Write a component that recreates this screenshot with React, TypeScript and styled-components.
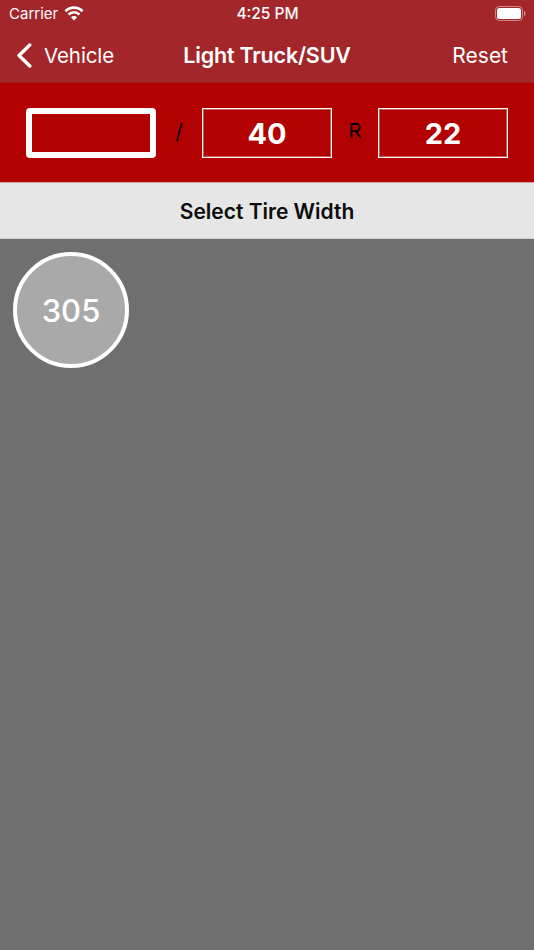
import React from 'react';
import styled, { createGlobalStyle } from 'styled-components';

const GlobalStyle = createGlobalStyle`
  html, body {
    margin: 0;
    padding: 0;
    background: #6f6f6f;
  }
  * {
    box-sizing: border-box;
  }
`;

const Screen = styled.div`
  width: 534px;
  height: 950px;
  display: flex;
  flex-direction: column;
  overflow: hidden;
  background: #6f6f6f;
  font-family: Inter, 'Liberation Sans', sans-serif;
`;

const Header = styled.header`
  height: 83px;
  background: #a2262a;
  color: #fff;
  border-bottom: 1px solid #9b1a1c;
`;

const StatusBar = styled.div`
  height: 28px;
  padding: 0 8px 1px 9px;
  display: grid;
  grid-template-columns: 1fr auto 1fr;
  align-items: center;
  font-size: 15.5px;
  font-weight: 500;
`;

const StatusLeft = styled.div`
  display: flex;
  align-items: center;
  gap: 6px;
  font-weight: 400;
  font-size: 15px;
`;

const StatusRight = styled.div`
  display: flex;
  justify-content: flex-end;
`;

const NavBar = styled.nav`
  height: 54px;
  padding: 0 17px;
  display: grid;
  grid-template-columns: 1fr auto 1fr;
  align-items: center;
`;

const BackLink = styled.div`
  display: flex;
  align-items: center;
  gap: 12px;
  font-size: 20.5px;
  letter-spacing: -0.1px;
`;

const NavTitle = styled.div`
  font-size: 21.5px;
  font-weight: 600;
  letter-spacing: -0.2px;
`;

const ResetLink = styled.div`
  justify-self: end;
  margin-right: 9px;
  font-size: 21px;
`;

const SizeBar = styled.section`
  height: 100px;
  padding: 25px 26px 0;
  display: flex;
  align-items: flex-start;
  justify-content: space-between;
  background: #b30000;
  border-bottom: 1px solid #d9a0a0;
`;

const SizeField = styled.div<{ $active?: boolean }>`
  width: 130px;
  height: 50px;
  display: flex;
  align-items: center;
  justify-content: center;
  color: #fff;
  font-size: 29px;
  font-weight: 700;
  border: ${({ $active }) => ($active ? '6px solid #fff' : '1px solid #fff')};
  border-radius: ${({ $active }) => ($active ? '4px' : '0')};
  box-shadow: ${({ $active }) => ($active ? 'none' : 'inset 0 0 0 1px rgba(255, 255, 255, 0.35)')};
`;

const Separator = styled.span<{ $size: number }>`
  width: 46px;
  height: 50px;
  display: flex;
  align-items: center;
  justify-content: center;
  color: #000;
  font-size: ${({ $size }) => $size}px;
  font-weight: 400;
  padding-bottom: 4px;
`;

const PromptBar = styled.div`
  height: 56px;
  padding-top: 1px;
  display: flex;
  align-items: center;
  justify-content: center;
  background: #e6e6e6;
  border-bottom: 1px solid #d0d0d0;
  color: #0c0c0c;
  font-size: 21px;
  font-weight: 600;
`;

const WidthGrid = styled.div`
  flex: 1;
  padding: 13px;
  display: flex;
  flex-wrap: wrap;
  align-content: flex-start;
  gap: 13px;
`;

const WidthOption = styled.button`
  width: 116px;
  height: 116px;
  padding: 0;
  display: flex;
  align-items: center;
  justify-content: center;
  border: 4px solid #fff;
  border-radius: 50%;
  background: #a9a9a9;
  color: #fff;
  font-family: inherit;
  font-size: 31px;
  font-weight: 550;
`;

const WifiIcon = () => (
  <svg width="20" height="15" viewBox="0 0 20 15" fill="none">
    <path d="M1.400 5.200C6.300.4 13.700.4 18.600 5.200" stroke="#fff" strokeWidth="2.600" />
    <path d="M4.600 8.500C7.700 5.500 12.300 5.500 15.400 8.500" stroke="#fff" strokeWidth="2.600" />
    <path d="M6.900 11.200C8.700 9.500 11.300 9.500 13.100 11.200L10 14.600Z" fill="#fff" />
  </svg>
);

const BatteryIcon = () => (
  <svg width="31" height="15" viewBox="0 0 31 15">
    <rect x="0.5" y="0.5" width="27" height="14" rx="4" fill="none" stroke="#fff" strokeOpacity="0.45" />
    <rect x="2" y="2" width="24" height="11" rx="2.500" fill="#fff" />
    <path d="M29 5v5c.9-.3 1.500-1.400 1.500-2.500S29.900 5.300 29 5z" fill="#fff" fillOpacity="0.5" />
  </svg>
);

const BackChevron = () => (
  <svg width="15" height="25" viewBox="0 0 15 25" fill="none" stroke="#fff" strokeWidth="3.400" strokeLinecap="round" strokeLinejoin="round">
    <path d="M12.800 2 L2 12.500 L12.800 23" />
  </svg>
);

export default function App() {
  return (
    <Screen>
      <GlobalStyle />
      <Header>
        <StatusBar>
          <StatusLeft>
            Carrier
            <WifiIcon />
          </StatusLeft>
          <span>4:25 PM</span>
          <StatusRight>
            <BatteryIcon />
          </StatusRight>
        </StatusBar>
        <NavBar>
          <BackLink>
            <BackChevron />
            Vehicle
          </BackLink>
          <NavTitle>Light Truck/SUV</NavTitle>
          <ResetLink>Reset</ResetLink>
        </NavBar>
      </Header>
      <SizeBar>
        <SizeField $active />
        <Separator $size={21}>/</Separator>
        <SizeField>40</SizeField>
        <Separator $size={20}>R</Separator>
        <SizeField>22</SizeField>
      </SizeBar>
      <PromptBar>Select Tire Width</PromptBar>
      <WidthGrid>
        <WidthOption>305</WidthOption>
      </WidthGrid>
    </Screen>
  );
}
